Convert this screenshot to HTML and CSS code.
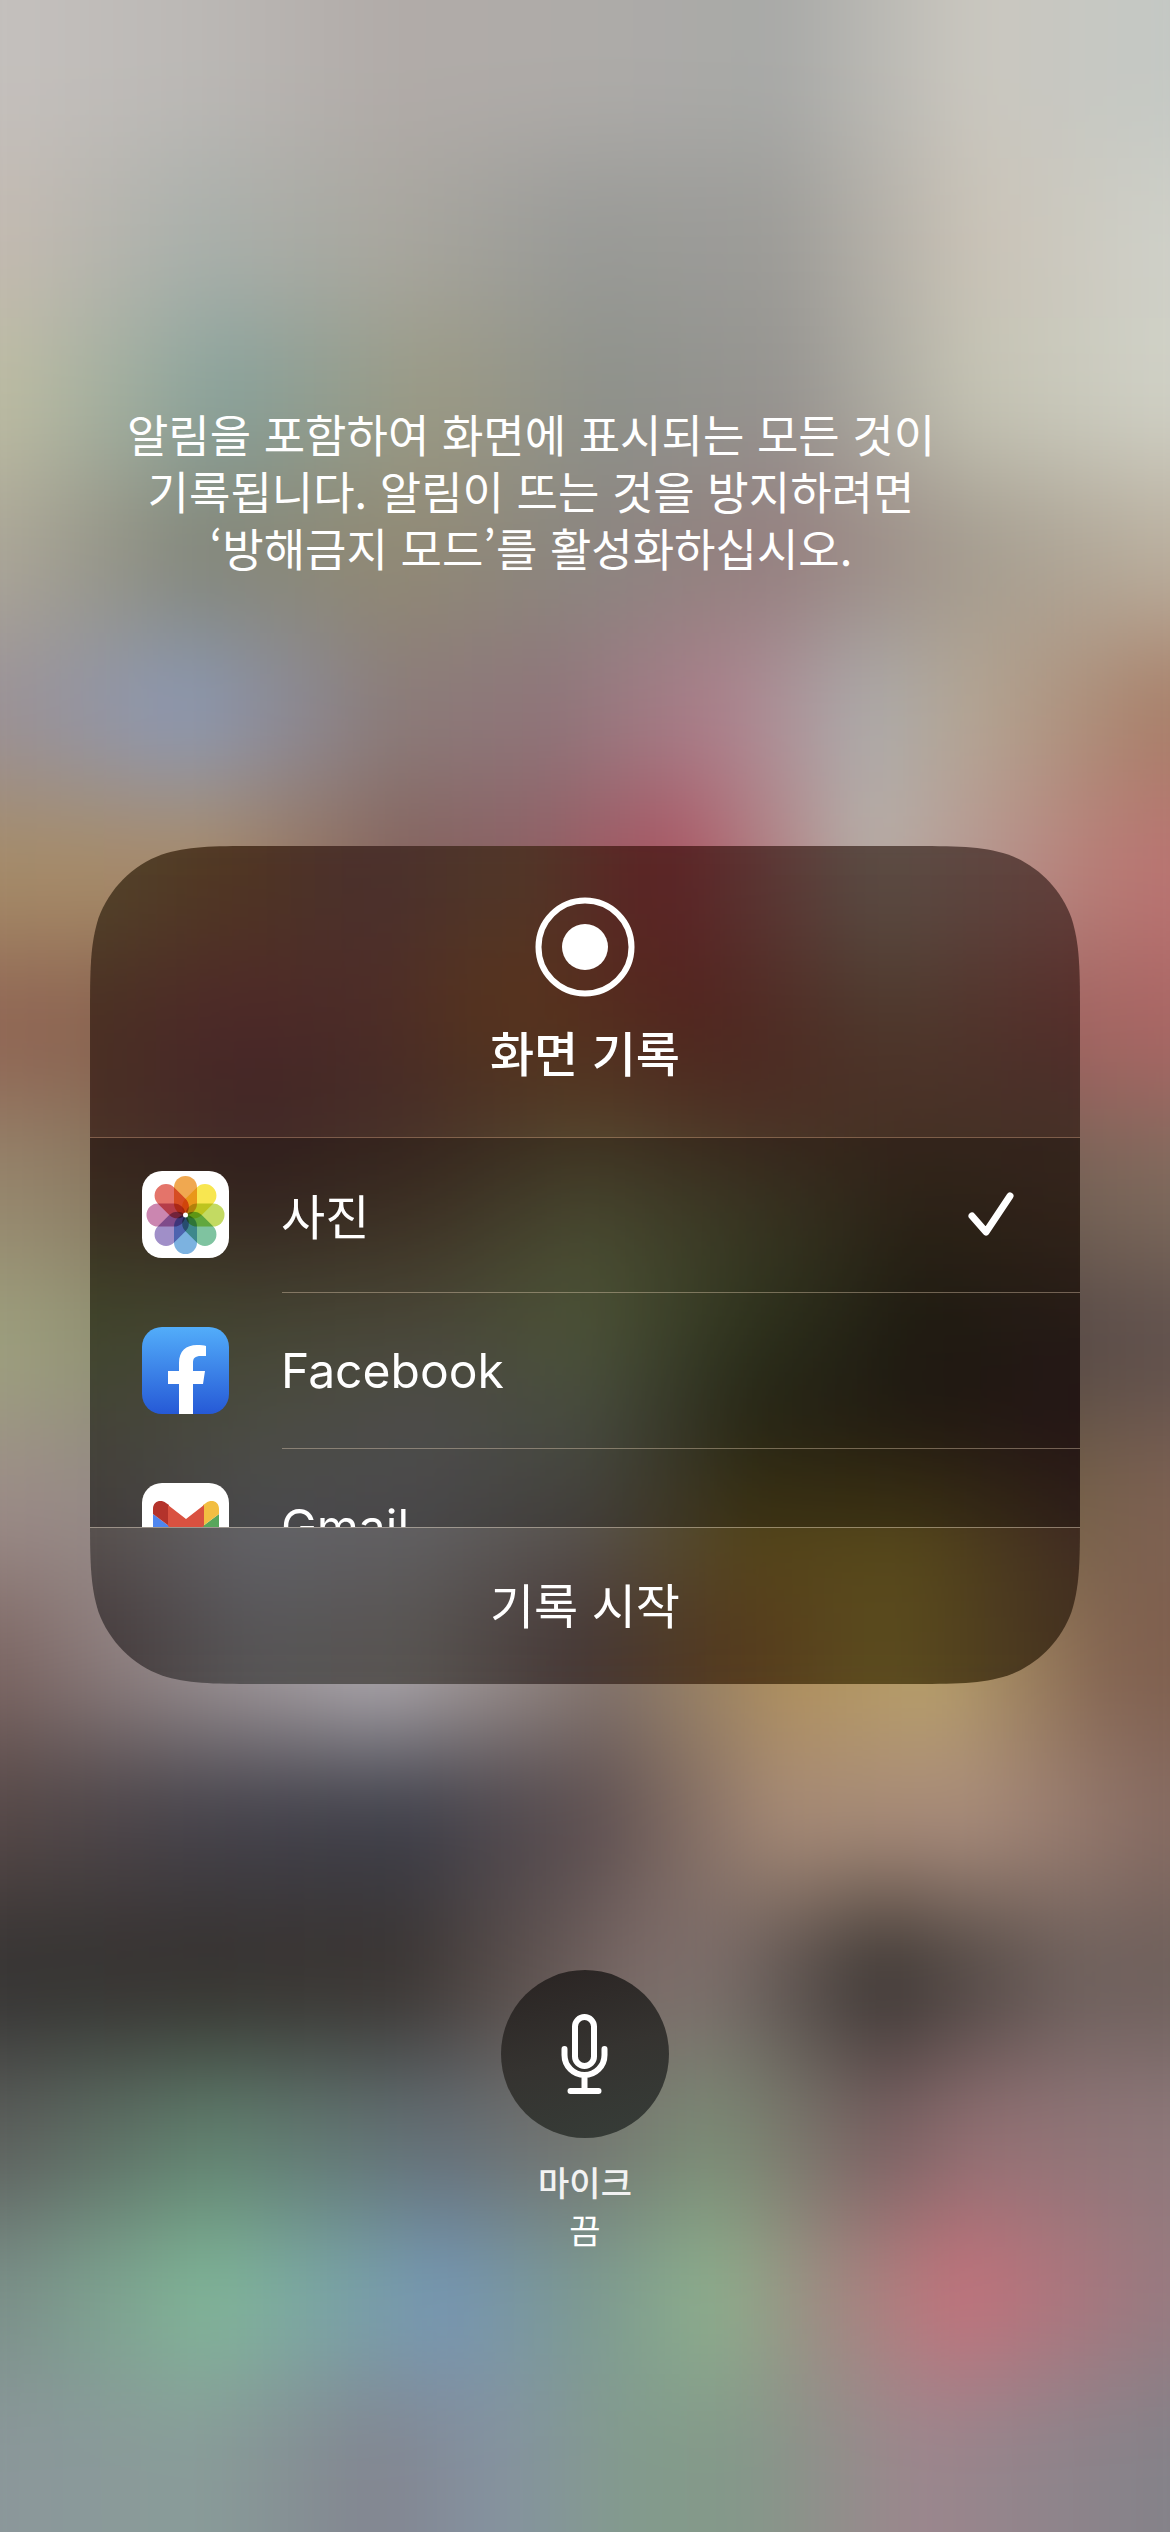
FILE: index.html
```html
<!DOCTYPE html>
<html lang="ko">
<head>
    <meta charset="UTF-8">
    <meta name="viewport" content="width=device-width, initial-scale=1.0">
    <title>화면 기록</title>
    <link rel="stylesheet" href="styles.css">
</head>
<body>

<!-- Home screen colours, one band per strip of the screen -->
<div class="wallpaper">
    <div class="bands home">
        <div class="band home-1"></div>
        <div class="band home-2"></div>
        <div class="band home-3"></div>
        <div class="band home-4"></div>
        <div class="band home-5"></div>
        <div class="band home-6"></div>
        <div class="band home-7"></div>
        <div class="band home-8"></div>
        <div class="band home-9"></div>
        <div class="band home-10"></div>
        <div class="band home-11"></div>
        <div class="band home-12"></div>
        <div class="band home-13"></div>
        <div class="band home-14"></div>
        <div class="band home-15"></div>
        <div class="band home-16"></div>
    </div>
</div>

<main class="screen">
    <p class="note">알림을 포함하여 화면에 표시되는 모든 것이<br>기록됩니다. 알림이 뜨는 것을 방지하려면<br>‘방해금지 모드’를 활성화하십시오.</p>

    <section class="card">
        <div class="card-glass">
            <div class="bands glass">
                <div class="band glass-1"></div>
                <div class="band glass-2"></div>
                <div class="band glass-3"></div>
                <div class="band glass-4"></div>
                <div class="band glass-5"></div>
                <div class="band glass-6"></div>
                <div class="band glass-7"></div>
                <div class="band glass-8"></div>
            </div>
        </div>

        <header class="card-header">
            <svg class="record-icon" viewBox="0 0 100 100">
                <circle cx="50" cy="50" r="46.5" fill="none" stroke="#fff" stroke-width="6"/>
                <circle cx="50" cy="50" r="23" fill="#fff"/>
            </svg>
            <h1>화면 기록</h1>
        </header>

        <div class="apps">
            <label class="app">
                <svg class="app-icon" viewBox="0 0 87 87">
                    <rect width="87" height="87" rx="20" fill="#fff"/>
                    <g class="petals">
                        <rect x="32" y="5" width="23" height="39" rx="11.5" fill="#f0a850"/>
                        <rect x="32" y="5" width="23" height="39" rx="11.5" fill="#f8e650" transform="rotate(45 43.5 44)"/>
                        <rect x="32" y="5" width="23" height="39" rx="11.5" fill="#c3da62" transform="rotate(90 43.5 44)"/>
                        <rect x="32" y="5" width="23" height="39" rx="11.5" fill="#7fc3a0" transform="rotate(135 43.5 44)"/>
                        <rect x="32" y="5" width="23" height="39" rx="11.5" fill="#7cb2e0" transform="rotate(180 43.5 44)"/>
                        <rect x="32" y="5" width="23" height="39" rx="11.5" fill="#a08fc8" transform="rotate(225 43.5 44)"/>
                        <rect x="32" y="5" width="23" height="39" rx="11.5" fill="#cb86b0" transform="rotate(270 43.5 44)"/>
                        <rect x="32" y="5" width="23" height="39" rx="11.5" fill="#e4746a" transform="rotate(315 43.5 44)"/>
                    </g>
                    <circle cx="43.5" cy="44" r="2.5" fill="#fff"/>
                </svg>
                <span class="app-name">사진</span>
                <input type="radio" name="target" checked>
                <svg class="check" viewBox="0 0 46 44">
                    <path d="M4 24L18 40L42 4" fill="none" stroke="#fff" stroke-width="7" stroke-linecap="round" stroke-linejoin="round"/>
                </svg>
            </label>
            <label class="app">
                <svg class="app-icon" viewBox="0 0 87 87">
                    <defs>
                        <linearGradient id="fb" x1="0" y1="0" x2="0" y2="1">
                            <stop offset="0" stop-color="#52adfa"/>
                            <stop offset="1" stop-color="#2659d6"/>
                        </linearGradient>
                    </defs>
                    <rect width="87" height="87" rx="20" fill="url(#fb)"/>
                    <path d="M37 87V57H26V44H37V36C37 24 44 18 55 18C59 18 62 18 64 19V29H59C53 29 51 31 51 36V44H63L61 57H51V87Z" fill="#fff"/>
                </svg>
                <span class="app-name">Facebook</span>
                <input type="radio" name="target">
                <svg class="check" viewBox="0 0 46 44">
                    <path d="M4 24L18 40L42 4" fill="none" stroke="#fff" stroke-width="7" stroke-linecap="round" stroke-linejoin="round"/>
                </svg>
            </label>
            <label class="app">
                <svg class="app-icon" viewBox="0 0 87 87">
                    <rect width="87" height="87" rx="20" fill="#fff"/>
                    <path d="M11 31L27 43V70H17A6 6 0 0 1 11 64Z" fill="#4f86ef"/>
                    <path d="M77 31L61 43V70H71A6 6 0 0 0 77 64Z" fill="#58a65c"/>
                    <path d="M11 26C11 18 19 16 24 20L27 22V43L11 31Z" fill="#b4332b"/>
                    <path d="M77 26C77 18 69 16 64 20L61 22V43L77 31Z" fill="#f2be42"/>
                    <path d="M26 22L44 36L62 22V43L44 57L26 43Z" fill="#d95140"/>
                </svg>
                <span class="app-name">Gmail</span>
                <input type="radio" name="target">
                <svg class="check" viewBox="0 0 46 44">
                    <path d="M4 24L18 40L42 4" fill="none" stroke="#fff" stroke-width="7" stroke-linecap="round" stroke-linejoin="round"/>
                </svg>
            </label>
        </div>

        <button class="start" type="button">기록 시작</button>
    </section>

    <div class="mic">
        <button class="mic-button" id="micButton" type="button" aria-labelledby="micLabel">
            <svg viewBox="0 0 48 80" fill="none" stroke="#fff" stroke-width="6" stroke-linecap="round">
                <rect x="14" y="3" width="19" height="49" rx="9.5"/>
                <path d="M3.5 35V41A20 20 0 0 0 43.5 41V35M23.5 61V77M9.5 77H37.5"/>
            </svg>
        </button>
        <span class="mic-label" id="micLabel">마이크</span>
        <span class="mic-state">끔</span>
    </div>
</main>

<svg class="defs" width="0" height="0">
    <!-- Melts the colour bands into each other -->
    <filter id="melt" x="0" y="0" width="1" height="1" color-interpolation-filters="sRGB">
        <feGaussianBlur stdDeviation="28 56"/>
    </filter>
    <!-- Continuous corner shape for the card -->
    <clipPath id="squircle" clipPathUnits="objectBoundingBox">
        <path d="M.176 0H.824C.875 0 .9 0 .9273 .0101C.9571 .023 .9805 .0507 .9914 .0859C1 .118 1 .148 1 .2076V.7924C1 .852 1 .882 .9914 .9141C.9805 .9493 .9571 .977 .9273 .9899C.9 1 .875 1 .824 1H.176C.125 1 .1 1 .0727 .9899C.0429 .977 .0195 .9493 .0086 .9141C0 .882 0 .852 0 .7924V.2076C0 .148 0 .118 .0086 .0859C.0195 .0507 .0429 .023 .0727 .0101C.1 0 .125 0 .176 0Z"/>
    </clipPath>
</svg>

</body>
</html>
```
FILE: styles.css
```css
* {
    box-sizing: border-box;
}
body {
    margin: 0;
    font-family: "Noto Sans CJK KR", sans-serif;
    color: #fff;
    background-color: #8c8581;
}
.wallpaper,
.card-glass {
    position: absolute;
    inset: 0;
    overflow: hidden;
}
/* one band taller at each end, so that the blur never fades at the edge */
.bands {
    position: absolute;
    display: flex;
    flex-direction: column;
    filter: url(#melt);
}
.home {
    inset: -6.25% -60px;
}
.glass {
    inset: -12.5% -60px;
}
.band {
    flex: 1;
}
.band:first-child,
.band:last-child {
    flex: 2;
}
.home-1 { background: linear-gradient(to right, #c4c0bd 5%, #bbb8b5, #b1aba8, #aeaba8, #a8a9a7, #cac7bf 80%, #c4c8c4 95%); }
.home-2 { background: linear-gradient(to right, #c3bab1 5%, #aab0ab, #a9a79f, #999a97, #9d9c98, #c9c2b6 80%, #cfd0c8 95%); }
.home-3 { background: linear-gradient(to right, #bcbca2 5%, #88a29b 22%, #9b9a85 38%, #8e918b, #979591, #c4c3b3 80%, #d0d1c6 95%); }
.home-4 { background: linear-gradient(to right, #aba697 5%, #838679, #918a74, #8b8680, #957f7f, #a49c8f 80%, #bab09f 95%); }
.home-5 { background: linear-gradient(to right, #9a9197 5%, #8b99b5 19%, #8b7c7a 35%, #8f757a, #ac808c 60%, #acabab 72%, #b3a593 80%, #a87f68 95%); }
.home-6 { background: linear-gradient(to right, #a68c68 5%, #a98b69, #84635e 36%, #8c6064 45%, #ac5462 57%, #b8b0a8 72%, #b87c76 90%, #bc6e70); }
.home-7 { background: linear-gradient(to right, #8f6453 5%, #84604c, #70504a, #805040, #7a4a44, #9a625e 80%, #aa6664 96%); }
.home-8 { background: linear-gradient(to right, #96866d 5%, #807058, #706850, #707050, #605840, #6c5c50, #7e6a5c 95%); }
.home-9 { background: linear-gradient(to right, #9da07e 5%, #88886c, #787868, #707860, #504c38, #504440, #5f504c 95%); }
.home-10 { background: linear-gradient(to right, #9c8c88 5%, #908886, #8a8688, #807868, #706030, #706040, #7d6152 95%); }
.home-11 { background: linear-gradient(to right, #7d6764 5%, #9a9092 20%, #b4afb4 34%, #84746c 52%, #b1915c 66%, #baa26a 77%, #846551 90%, #7c5b4b); }
.home-12 { background: linear-gradient(to right, #554847 5%, #45424a 20%, #3d3e49 36%, #5d4f50 51%, #a68a77 65%, #a98c7c 80%, #866b62 95%); }
.home-13 { background: linear-gradient(to right, #343231 5%, #35312e, #3a3431 36%, #7c6b68 54%, #7a6c69 60%, #393431 73%, #6c5f5b 88%, #6e605b); }
.home-14 { background: linear-gradient(to right, #5c5f5c 5%, #60806e 21%, #646e75 38%, #72736f, #7b8b75 60%, #786162 73%, #927174 81%, #8e797b 95%); }
.home-15 { background: linear-gradient(to right, #7b9089 5%, #80b898 21%, #7597b6 39%, #7c9a92 50%, #8db08c 60%, #a08a82 69%, #c4717b 79%, #987a80 95%); }
.home-16 { background: linear-gradient(to right, #8b979a 5%, #899c99 20%, #828590 34%, #8592a0 43%, #839b8c 54%, #849889 62%, #9c868d 76%, #848289 95%); }

.screen {
    position: relative;
    min-height: 100vh;
    padding: 405px 90px 120px;
    display: flex;
    flex-direction: column;
}
.note {
    margin: 0 108px 270px 0;
    font-size: 45px;
    line-height: 57px;
    text-align: center;
}

.card {
    position: relative;
    display: flex;
    flex-direction: column;
    clip-path: url(#squircle);
}
.glass-1 { background: linear-gradient(to right, #54452b 5%, #503622, #4a302d, #503728, #5c2225 57%, #5a4c44 76%, #623f3b 95%); }
.glass-2 { background: linear-gradient(to right, #4a2f22 5%, #4f2829, #4e2c27, #5a341a 43%, #52231e 60%, #4e3a2d, #582c29 95%); }
.glass-3 { background: linear-gradient(to right, #4a2f25 5%, #3f2525, #452c26, #4f3823, #4a2b22, #4a3127, #46302a 95%); }
.glass-4 { background: linear-gradient(to right, #4e3b2b 5%, #47312a, #51402e, #5f6041, #4d4a2f, #3a2e1e, #453022 95%); }
.glass-5 { background: linear-gradient(to right, #566038 5%, #5b5d42, #626049, #667048, #3f4628, #282416, #31241e 95%); }
.glass-6 { background: linear-gradient(to right, #5b594c 5%, #656659, #696767, #5e6455, #302e1b, #2a1f18, #301b1c 95%); }
.glass-7 { background: linear-gradient(to right, #5a5250 5%, #64646c, #616063, #59534f, #564818, #56481a 80%, #402b23 95%); }
.glass-8 { background: linear-gradient(to right, #44393a 5%, #565455, #575350, #453735, #553a1d 64%, #5c4c1e 77%, #43301f 95%); }

.card-header {
    position: relative;
    height: 292px;
    padding-top: 51px;
    display: flex;
    flex-direction: column;
    align-items: center;
    gap: 20px;
    border-bottom: 1px solid rgba(255, 200, 160, 0.3);
}
.record-icon {
    width: 100px;
    height: 100px;
}
h1 {
    margin: 0;
    font-size: 48px;
    line-height: 68px;
    font-weight: 500;
}
.apps {
    position: relative;
    height: 389px;
    overflow: hidden;
    background-color: rgba(0, 0, 0, 0.25);
}
.app {
    position: relative;
    display: flex;
    align-items: center;
    gap: 52px;
    height: 156px;
    padding: 0 66px 4px 52px;
}
/* divider starts under the app name */
.app::after {
    content: "";
    position: absolute;
    left: 192px;
    right: 0;
    bottom: 1px;
    height: 1px;
    background-color: rgba(255, 230, 200, 0.35);
}
.app-icon {
    width: 87px;
    height: 87px;
}
.petals rect {
    mix-blend-mode: multiply;
}
.app-name {
    flex: 1;
    font-family: Inter, "Noto Sans CJK KR", sans-serif;
    font-size: 48px;
}
.app input {
    position: absolute;
    opacity: 0;
}
.check {
    width: 46px;
    height: 44px;
    visibility: hidden;
}
.app input:checked + .check {
    visibility: visible;
}
.start {
    position: relative;
    height: 157px;
    padding: 0 0 6px;
    border: none;
    border-top: 1px solid rgba(255, 240, 220, 0.4);
    background: none;
    color: #fff;
    font-family: inherit;
    font-size: 48px;
    cursor: pointer;
}

.mic {
    margin-top: 286px;
    display: flex;
    flex-direction: column;
    align-items: center;
    font-size: 34px;
    line-height: 48px;
}
.mic-button {
    width: 168px;
    height: 168px;
    margin-bottom: 20px;
    padding: 0;
    display: flex;
    align-items: center;
    justify-content: center;
    border: none;
    border-radius: 50%;
    background: linear-gradient(165deg, #292322, #353330 50%, #363d38);
    cursor: pointer;
}
.mic-button svg {
    width: 48px;
    height: 80px;
}
.mic-label {
    font-weight: 500;
    color: #f2f2f2;
}
.defs {
    position: absolute;
}
```
